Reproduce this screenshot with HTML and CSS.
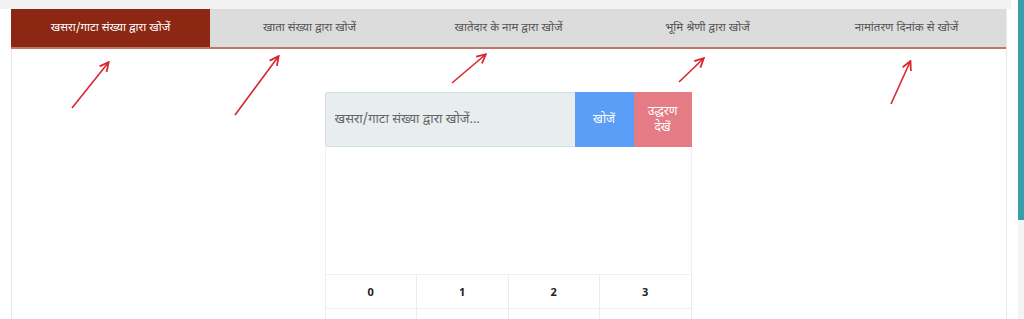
FILE: index.html
```html
<!DOCTYPE html>
<html lang="hi">
<head>
  <meta charset="UTF-8">
  <title>भूलेख खोजें</title>
  <link rel="stylesheet" href="styles.css">
</head>
<body>

  <div class="page">
    <div class="main">
      <div class="top-strip"></div>

      <div class="panel">
        <div class="tabs">
          <div class="tab active">खसरा/गाटा संख्या द्वारा खोजें</div>
          <div class="tab">खाता संख्या द्वारा खोजें</div>
          <div class="tab">खातेदार के नाम द्वारा खोजें</div>
          <div class="tab">भूमि श्रेणी द्वारा खोजें</div>
          <div class="tab">नामांतरण दिनांक से खोजें</div>
        </div>

        <div class="search-area">
          <div class="search-box">
            <input type="text" class="search-input" placeholder="खसरा/गाटा संख्या द्वारा खोजें...">
            <button class="btn btn-search">खोजें</button>
            <button class="btn btn-example">उद्धरण<br>देखें</button>
          </div>
          <div class="results"></div>
          <div class="num-row">
            <div class="num">0</div>
            <div class="num">1</div>
            <div class="num">2</div>
            <div class="num">3</div>
          </div>
          <div class="num-row">
            <div class="num"></div>
            <div class="num"></div>
            <div class="num"></div>
            <div class="num"></div>
          </div>
        </div>

        <!-- annotation arrows -->
        <svg class="arrows" width="996" height="120" viewBox="11 0 996 120">
          <defs>
            <marker id="head" viewBox="0 0 10 10" refX="8" refY="5" markerWidth="7" markerHeight="7" orient="auto">
              <path d="M1 1 L9 5 L1 9" fill="none" stroke="#d8262f" stroke-width="1.6"/>
            </marker>
          </defs>
          <g stroke="#d8262f" stroke-width="1.6" fill="none" marker-end="url(#head)">
            <line x1="72" y1="108" x2="108" y2="63"/>
            <line x1="235" y1="115" x2="278" y2="57"/>
            <line x1="452" y1="83" x2="485" y2="55"/>
            <line x1="679" y1="82" x2="703" y2="59"/>
            <line x1="891" y1="104" x2="910" y2="62"/>
          </g>
        </svg>
      </div>
    </div>

    <div class="scrollbar">
      <div class="thumb"></div>
    </div>
  </div>

</body>
</html>
```

FILE: styles.css
```css
body {
  margin: 0;
  background: #fff;
  font-family: "Noto Sans Devanagari", "Lohit Devanagari", "Noto Sans", "Liberation Sans", sans-serif;
  font-size: 12px;
}

.page {
  display: flex;
  height: 319px;
  overflow: hidden;
}

.main {
  flex: 1;
  padding-right: 11px;
}

.top-strip {
  height: 9px;
  background: #f2f2f2;
  margin-right: -4px;
}

.panel {
  position: relative;
  margin-left: 11px;
  border-left: 1px solid #e8e8e8;
  border-right: 1px solid #e8e8e8;
  height: 310px;
}

.tabs {
  display: flex;
  background: #dcdcdc;
  border-bottom: 2px solid #c0766a;
  margin-left: -1px;
}

.tab {
  flex: 1;
  height: 38px;
  display: flex;
  align-items: center;
  justify-content: center;
  color: #555;
  font-size: 11.5px;
}

.tab.active {
  background: #8b2712;
  color: #fff;
}

.search-area {
  width: 367px;
  margin: 43px auto 0;
  transform: translateX(-1px);
}

.search-box {
  display: flex;
  height: 55px;
}

.search-input {
  flex: 1;
  min-width: 0;
  border: 1px solid #d3e0e2;
  border-right: none;
  border-radius: 3px 0 0 3px;
  background: #e8edef;
  padding: 0 9px;
  font-family: inherit;
  font-size: 13px;
  color: #555;
}

.search-input::placeholder {
  color: #666;
}

.btn {
  border: none;
  color: #fff;
  font-family: inherit;
  font-size: 12px;
  line-height: 16px;
  padding: 0;
}

.btn-search {
  width: 59px;
  background: #5b9ef8;
}

.btn-example {
  width: 58px;
  background: #e57b84;
}

.results {
  height: 127px;
  border: 1px solid #f0f0f0;
  border-top: none;
}

.num-row {
  display: grid;
  grid-template-columns: repeat(4, 1fr);
  height: 34px;
  border-left: 1px solid #ececec;
}

.num {
  display: flex;
  align-items: center;
  justify-content: center;
  border-right: 1px solid #ececec;
  border-bottom: 1px solid #ececec;
  font-family: "Open Sans", "Liberation Sans", sans-serif;
  font-weight: bold;
  font-size: 11px;
  color: #222;
}

.arrows {
  position: absolute;
  left: -1px;
  top: -9px;
  pointer-events: none;
}

.scrollbar {
  width: 6px;
  background: #f4f4f4;
}

.thumb {
  height: 220px;
  background: #3a9ea8;
}
```
